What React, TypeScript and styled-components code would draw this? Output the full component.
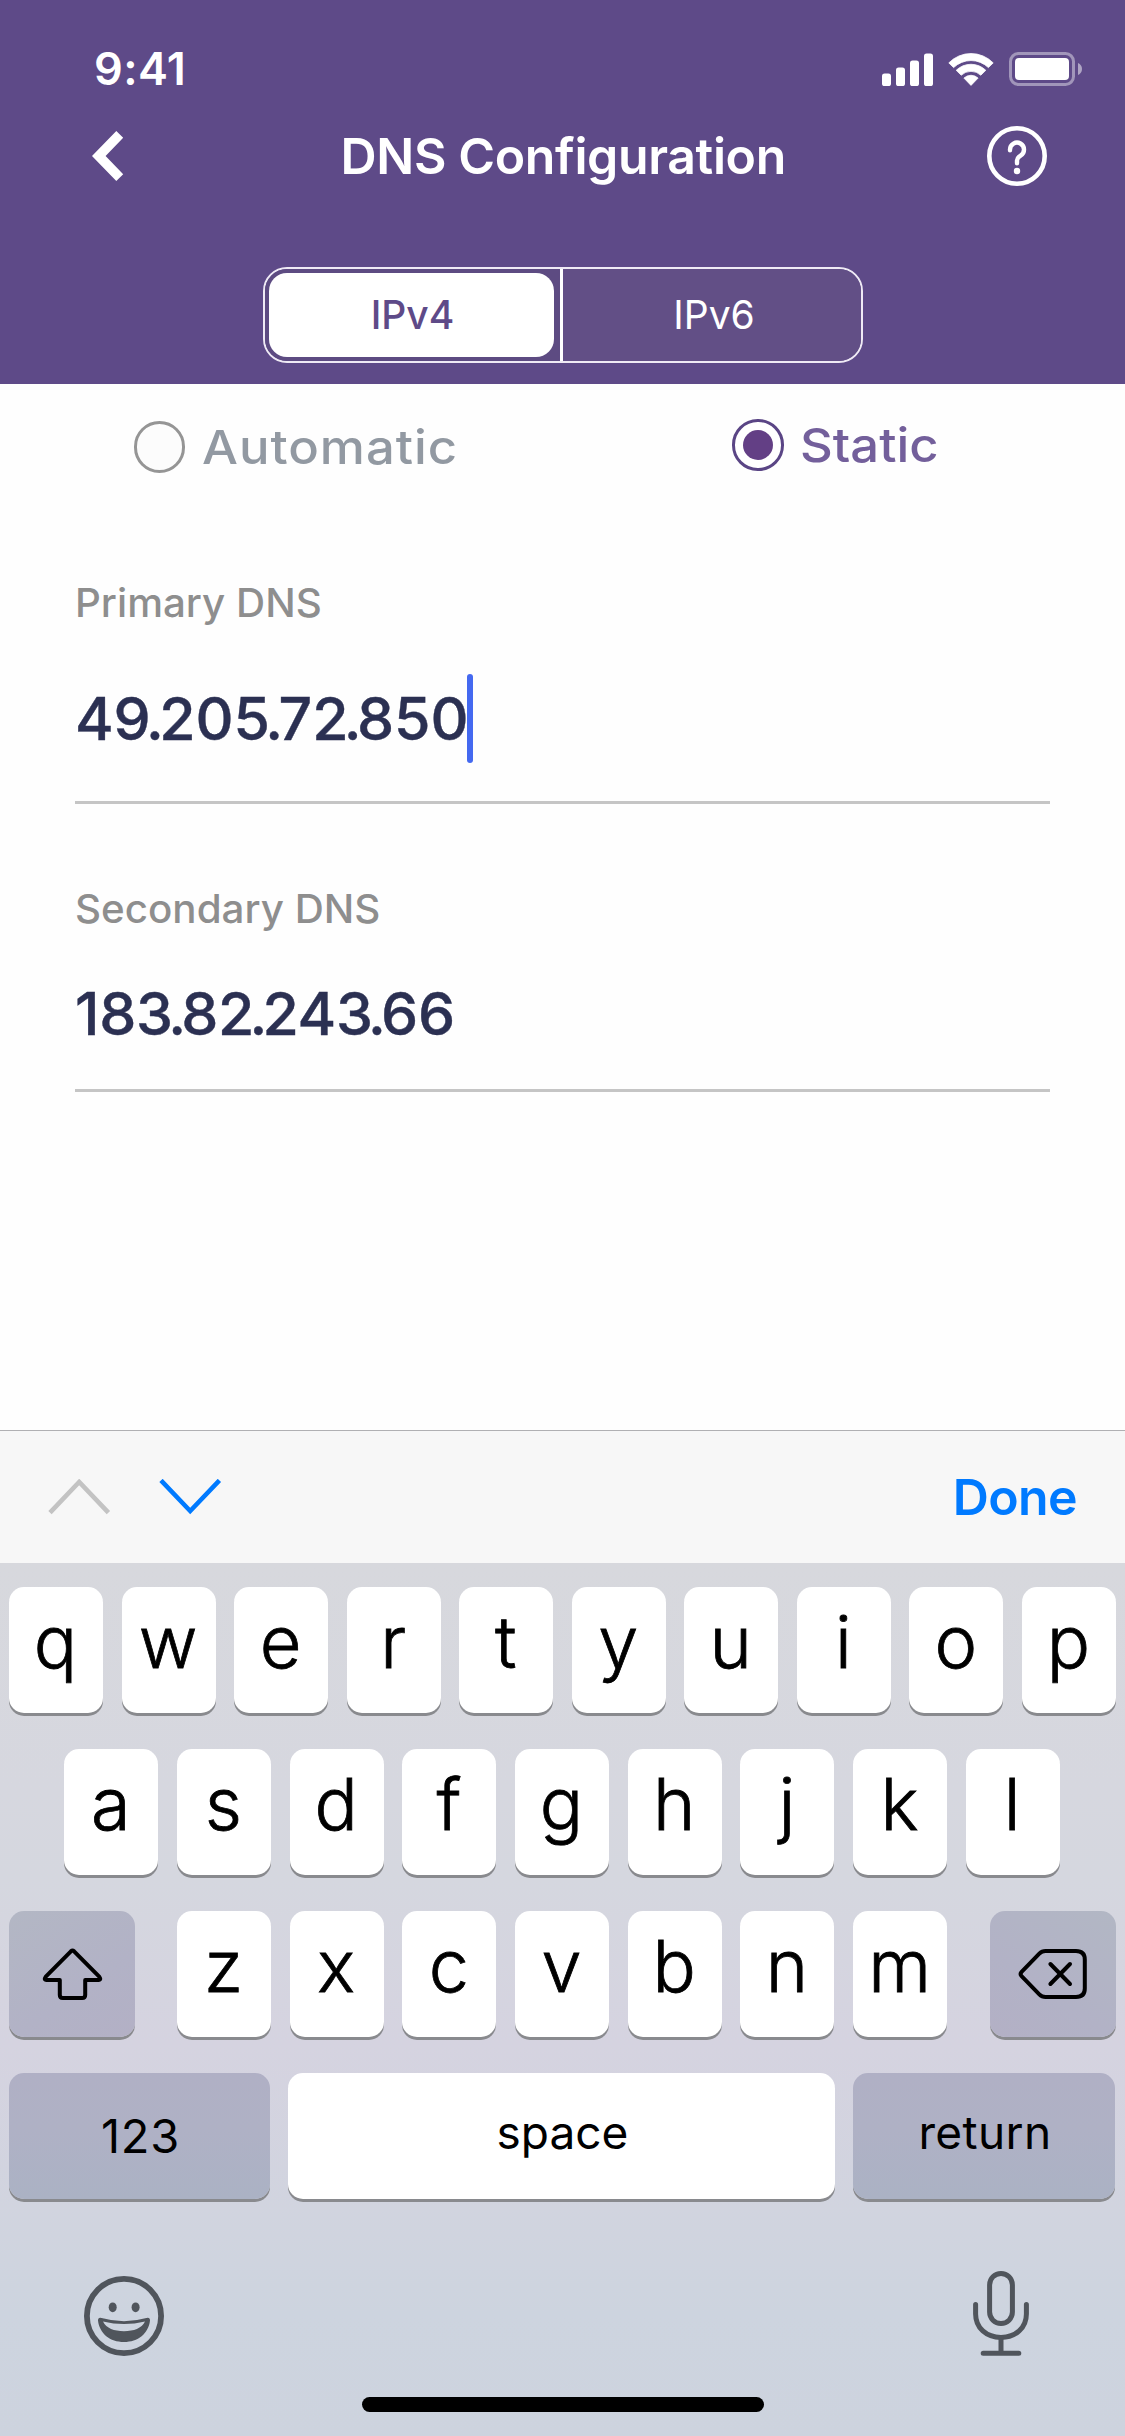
import React, { useState } from "react";
import styled, { createGlobalStyle, css } from "styled-components";

const GlobalStyle = createGlobalStyle`
  *, *::before, *::after { box-sizing: border-box; }
  html, body { margin: 0; padding: 0; background: #fefefe; }
  button { margin: 0; padding: 0; border: 0; background: none; color: inherit; font: inherit; }
  svg { display: block; flex: none; }
`;

const Screen = styled.div`
  display: flex;
  flex-direction: column;
  width: 1125px;
  height: 2436px;
  overflow: hidden;
  background: #fefefe;
  font-family: Inter, "Liberation Sans", sans-serif;
  white-space: nowrap;
`;

/* ---------- header ---------- */

const Header = styled.header`
  flex: none;
  display: flex;
  flex-direction: column;
  align-items: center;
  height: 384px;
  background: #5e4a88;
  color: #fff;
`;

const StatusBar = styled.div`
  display: flex;
  align-items: center;
  justify-content: space-between;
  width: 100%;
  height: 112px;
  padding: 26px 43px 0 94px;
`;

const Clock = styled.span`
  font-size: 45px;
  font-weight: 600;
  line-height: 60px;
  letter-spacing: 0.4px;
`;

const StatusIcons = styled.div`
  display: flex;
  align-items: center;
  gap: 15px;
`;

const NavBar = styled.nav`
  display: flex;
  align-items: center;
  justify-content: space-between;
  width: 100%;
  height: 88px;
  padding: 0 78px 0 92px;
`;

const NavButton = styled.button`
  display: flex;
  width: 60px;
`;

const Title = styled.h1`
  margin: 0 12.5px 0 0;
  font-size: 50px;
  font-weight: 600;
  line-height: 64px;
  letter-spacing: -0.37px;
`;

const Segments = styled.div`
  display: flex;
  width: 600px;
  height: 96px;
  margin-top: 67px;
  border: 2px solid #efeaf5;
  border-radius: 24px;
  overflow: hidden;
`;

const Segment = styled.button<{ $active: boolean }>`
  flex: 1;
  padding: 4px;
  background: ${(p) => (p.$active ? "#5d4b82" : "#624f86")};
  color: ${(p) => (p.$active ? "#5e4a88" : "#fff")};
  font-size: 39px;
  font-weight: ${(p) => (p.$active ? 500 : 400)};

  &:first-child {
    flex: none;
    width: 295px;
  }

  & + & {
    border-left: 3px solid #fff;
  }
`;

const SegmentLabel = styled.span<{ $active: boolean }>`
  display: flex;
  align-items: center;
  justify-content: center;
  height: 84px;
  margin-right: ${(p) => (p.$active ? "2px" : "0")};
  padding: 0 0 1px ${(p) => (p.$active ? "3px" : "5px")};
  border-radius: 18px;
  background: ${(p) => (p.$active ? "#fff" : "transparent")};
`;

/* ---------- form ---------- */

const Form = styled.main`
  flex: none;
  height: 1046px;
  padding: 0 75px;
`;

const RadioRow = styled.div`
  display: grid;
  grid-template-columns: 598.5px 1fr;
  height: 195px;
  padding: 34px 0 0 58.5px;
`;

const RadioOption = styled.label<{ $checked: boolean }>`
  display: flex;
  align-items: center;
  gap: 16.5px;
  height: 54px;
  margin-top: ${(p) => (p.$checked ? "0" : "2px")};
  color: ${(p) => (p.$checked ? "#735f9b" : "#9299a2")};
`;

const RadioText = styled.span<{ $tracking: number }>`
  padding-bottom: 2px;
  font-size: 47px;
  font-weight: 500;
  letter-spacing: ${(p) => p.$tracking}px;
  transform: scaleX(1.08);
  transform-origin: left;
`;

const RadioMark = styled.span<{ $checked: boolean }>`
  display: flex;
  align-items: center;
  justify-content: center;
  width: 51.5px;
  height: 51.5px;
  border: 3px solid ${(p) => (p.$checked ? "#5a4585" : "#959595")};
  border-radius: 50%;
  background: ${(p) => (p.$checked ? "#fff" : "#fcfcfc")};

  &::after {
    content: "";
    width: 30px;
    height: 30px;
    border-radius: 50%;
    background: ${(p) => (p.$checked ? "#633f85" : "transparent")};
  }
`;

const Field = styled.div<{ $focused: boolean }>`
  display: flex;
  flex-direction: column;
  gap: ${(p) => (p.$focused ? "47px" : "36px")};
  padding-bottom: ${(p) => (p.$focused ? "38px" : "31px")};
  border-bottom: 3px solid #c5c5c5;

  & + & {
    margin-top: 81px;
  }
`;

const FieldLabel = styled.span`
  height: 48px;
  color: #8e8e8e;
  font-size: 39px;
  font-weight: 500;
  line-height: 48px;
  transform: scaleX(1.034);
  transform-origin: left;
`;

const FieldValue = styled.div<{ $tracking: number }>`
  display: flex;
  align-items: center;
  height: 89px;
  color: #2b3052;
  font-size: 59px;
  font-weight: 500;
  letter-spacing: ${(p) => p.$tracking}px;
  -webkit-text-stroke: 0.4px #2b3052;
`;

const Dot = styled.span`
  margin: 0 -4.6px;
`;

const Caret = styled.span`
  width: 6px;
  height: 89px;
  margin-left: -1.5px;
  border-radius: 3px;
  background: #4469f0;
`;

/* ---------- keyboard ---------- */

const AccessoryBar = styled.div`
  flex: none;
  display: flex;
  align-items: center;
  height: 133px;
  padding: 0 48px;
  border-top: 1px solid #b0b0b3;
  background: #f7f7f7;
`;

const StepButton = styled.button<{ $disabled?: boolean }>`
  display: flex;
  margin-right: 48px;
  color: ${(p) => (p.$disabled ? "#c3c3c3" : "#007aff")};
`;

const DoneButton = styled.button`
  margin-left: auto;
  color: #007aff;
  font-size: 50px;
  font-weight: 600;
  letter-spacing: -0.6px;
`;

const Keyboard = styled.section`
  flex: 1;
  display: flex;
  flex-direction: column;
  gap: 36px;
  padding: 24px 9px 0;
  background: linear-gradient(180deg, #d7d8dd 0%, #d6d7df 26%, #d5d7df 36%, #d5d3e0 55%, #d1d4df 74%, #cdd4df 86%, #cdd3de 100%);
`;

const KeyRow = styled.div`
  display: flex;
  justify-content: space-between;
  height: 126px;
`;

const WordRow = styled.div`
  display: flex;
  gap: 18px;
  height: 126px;
`;

const LetterKeys = styled.div`
  display: flex;
  gap: 18.7px;
  margin: 0 auto;
  padding-right: 1px;
`;

const keyCap = css`
  display: flex;
  align-items: center;
  justify-content: center;
  height: 126px;
  border-radius: 15px;
  box-shadow: 0 3px 0 #898a8e;
  color: #000;
`;

const LetterKey = styled.button`
  ${keyCap}
  width: 94px;
  padding: 0 1px 17.5px 0;
  background: #fff;
  font-size: 72px;
  font-weight: 300;
  -webkit-text-stroke: 0.8px #000;
`;

const ActionKey = styled.button<{ $width: number; $tone: "left" | "right" | "light"; $lift?: number }>`
  ${keyCap}
  width: ${(p) => p.$width}px;
  padding-bottom: ${(p) => p.$lift ?? 0}px;
  background: ${(p) =>
    p.$tone === "light"
      ? "#fff"
      : p.$tone === "left"
        ? "linear-gradient(145deg, #b3b7c4, #b2b2c6 60%, #b3b0c5)"
        : "linear-gradient(215deg, #b2b7c4, #b2b2c6 60%, #b3b0c5)"};
`;

const WordKey = styled(ActionKey)<{ $size?: number; $spacing?: number }>`
  padding-left: 2px;
  background: ${(p) => (p.$tone === "light" ? "#fff" : "linear-gradient(180deg, #b0b0c5, #afb1c5 45%, #abb2c4)")};
  font-size: ${(p) => p.$size ?? 46}px;
  font-weight: 400;
  letter-spacing: ${(p) => p.$spacing ?? 0}px;
`;

const KeyboardFooter = styled.div`
  display: flex;
  align-items: flex-start;
  justify-content: space-between;
  height: 126px;
  padding: 36px 87px 0 75px;
  color: #50555c;
`;

const EmojiButton = styled.button`
  display: flex;
  padding-top: 5px;
`;

const HomeIndicator = styled.div`
  width: 402px;
  height: 15px;
  margin: 0 auto;
  border-radius: 8px;
  background: #000;
`;

/* ---------- icons ---------- */

const SignalIcon = () => (
  <svg width="51" height="33" viewBox="0 0 51 33" fill="#fff">
    <rect x="0" y="20.5" width="9" height="12.5" rx="2.6" />
    <rect x="14" y="14.5" width="9" height="18.5" rx="2.6" />
    <rect x="28" y="7.5" width="9" height="25.5" rx="2.6" />
    <rect x="42" y="0.5" width="9" height="32.5" rx="2.6" />
  </svg>
);

const WifiIcon = () => (
  <svg width="46" height="33" viewBox="0 0 46 33" fill="#fff" stroke="#fff" strokeWidth="0.8" strokeLinejoin="round">
    <path d="M.8 9.9A31 31 0 0 1 45.2 9.9L40.4 14.6A25 25 0 0 0 5.6 14.6Z" />
    <path d="M8.2 17.3A21.2 21.2 0 0 1 37.8 17.3L32.8 22.2A14.3 14.3 0 0 0 13.2 22.2Z" />
    <path d="M15.9 25.1A10.3 10.3 0 0 1 30.1 25.1L23 32.4Z" />
  </svg>
);

const BatteryIcon = () => (
  <svg width="73" height="34" viewBox="0 0 73 34" fill="none">
    <rect x="1.5" y="1.5" width="63" height="31" rx="8" stroke="#fff" strokeOpacity="0.42" strokeWidth="3" />
    <rect x="6" y="6" width="54" height="22" rx="4" fill="#fff" />
    <path d="M69 11C71.6 12 73 14.4 73 17S71.6 22 69 23Z" fill="#fff" fillOpacity="0.5" />
  </svg>
);

const BackIcon = () => (
  <svg width="32" height="50" viewBox="0 0 32 50" fill="#fff">
    <path d="M0 25L24.3 0L31.2 6.8L13.6 25L31.2 43.2L24.3 50Z" />
  </svg>
);

const HelpIcon = () => (
  <svg width="60" height="60" viewBox="0 0 60 60" fill="none" stroke="#fff">
    <circle cx="30" cy="30" r="27.7" strokeWidth="4.6" />
    <path d="M23 24.2V23.6A7 7 0 1 1 33.6 29.6C31 31.2 30 32 30 34.4V37.2" strokeWidth="4.4" strokeLinecap="round" strokeLinejoin="round" />
    <circle cx="30" cy="45" r="3.2" fill="#fff" stroke="none" />
  </svg>
);

const StepIcon = ({ down }: { down?: boolean }) => (
  <svg width="63" height="36" viewBox="0 0 63 36" fill="none" stroke="currentColor" strokeWidth="4.6">
    <path d={down ? "M2 1.4L31.2 32L60.4 1.4" : "M2 33.6L31.2 3L60.4 33.6"} />
  </svg>
);

const ShiftIcon = () => (
  <svg width="61" height="54" viewBox="0 0 61 54" fill="none" stroke="#000" strokeWidth="4" strokeLinejoin="round">
    <path d="M28.9 4.3Q30.5 2.8 32.1 4.3L57.2 29.6Q59.6 33 56.4 33H43.2V48Q43.2 51 40.2 51H20.8Q17.8 51 17.8 48V33H4.6Q1.4 33 3.8 29.6Z" />
  </svg>
);

const DeleteIcon = () => (
  <svg width="71" height="52" viewBox="0 0 71 52" fill="none" stroke="#000" strokeWidth="4" strokeLinecap="round" strokeLinejoin="round">
    <path d="M27.5 3H58Q66.8 3 66.8 11.5V40.5Q66.8 49 58 49H27.5Q24 49 21.3 46.3L3.6 28.2Q1.6 26 3.6 23.8L21.3 5.7Q24 3 27.5 3Z" />
    <path d="M32.4 16L52 36M52 16L32.4 36" />
  </svg>
);

const EmojiIcon = () => (
  <svg width="80" height="80" viewBox="0 0 80 80" fill="currentColor">
    <circle cx="40" cy="40" r="37.1" fill="none" stroke="currentColor" strokeWidth="5.8" />
    <ellipse cx="28.7" cy="31.3" rx="4" ry="4.9" />
    <ellipse cx="51.6" cy="31.3" rx="4" ry="4.9" />
    <path
      fillRule="evenodd"
      d="M14 44.5Q14 41 17.6 42Q40 48.4 62.4 42Q66 41 66 44.5C64.5 57.5 54 66 40 66S15.5 57.5 14 44.5ZM19 45.6C22.5 52.5 30 55.2 40 55.2S57.5 52.5 61 45.6Q40 50.6 19 45.6Z"
    />
  </svg>
);

const MicIcon = () => (
  <svg width="56" height="85" viewBox="0 0 56 85" fill="none" stroke="currentColor" strokeWidth="5" strokeLinecap="round">
    <rect x="16.6" y="2.5" width="22.8" height="50" rx="11.4" />
    <path d="M2.6 33.5V43C2.6 57 13.4 66.4 28 66.4S53.4 57 53.4 43V33.5" />
    <path d="M28 66.4V82M10.2 82.2H45.8" />
  </svg>
);

/* ---------- screen ---------- */

const protocols = ["IPv4", "IPv6"];
const modes = [
  { name: "Automatic", tracking: 0.9 },
  { name: "Static", tracking: 0 },
];
const fields = [
  { label: "Primary DNS", value: "49.205.72.850", tracking: -0.1 },
  { label: "Secondary DNS", value: "183.82.243.66", tracking: -0.3 },
];

const Address = ({ value }: { value: string }) => (
  <span>
    {value.split(".").map((part, i) => (
      <React.Fragment key={i}>
        {i > 0 && <Dot>.</Dot>}
        {part}
      </React.Fragment>
    ))}
  </span>
);

const Letters = ({ keys }: { keys: string }) => (
  <>
    {keys.split("").map((k) => (
      <LetterKey key={k}>{k}</LetterKey>
    ))}
  </>
);

export default function App() {
  const [protocol, setProtocol] = useState("IPv4");
  const [mode, setMode] = useState("Static");
  const [focus, setFocus] = useState(0);

  return (
    <>
      <GlobalStyle />
      <Screen>
        <Header>
          <StatusBar>
            <Clock>9:41</Clock>
            <StatusIcons>
              <SignalIcon />
              <WifiIcon />
              <BatteryIcon />
            </StatusIcons>
          </StatusBar>
          <NavBar>
            <NavButton aria-label="Back">
              <BackIcon />
            </NavButton>
            <Title>DNS Configuration</Title>
            <NavButton aria-label="Help">
              <HelpIcon />
            </NavButton>
          </NavBar>
          <Segments>
            {protocols.map((name) => (
              <Segment key={name} $active={name === protocol} onClick={() => setProtocol(name)}>
                <SegmentLabel $active={name === protocol}>{name}</SegmentLabel>
              </Segment>
            ))}
          </Segments>
        </Header>

        <Form>
          <RadioRow>
            {modes.map(({ name, tracking }) => (
              <RadioOption key={name} $checked={name === mode} onClick={() => setMode(name)}>
                <RadioMark $checked={name === mode} />
                <RadioText $tracking={tracking}>{name}</RadioText>
              </RadioOption>
            ))}
          </RadioRow>
          {fields.map((field, i) => (
            <Field key={field.label} $focused={i === focus} onClick={() => setFocus(i)}>
              <FieldLabel>{field.label}</FieldLabel>
              <FieldValue $tracking={field.tracking}>
                <Address value={field.value} />
                {i === focus && <Caret />}
              </FieldValue>
            </Field>
          ))}
        </Form>

        <AccessoryBar>
          <StepButton $disabled aria-label="Previous field">
            <StepIcon />
          </StepButton>
          <StepButton aria-label="Next field">
            <StepIcon down />
          </StepButton>
          <DoneButton>Done</DoneButton>
        </AccessoryBar>

        <Keyboard>
          <KeyRow>
            <Letters keys="qwertyuiop" />
          </KeyRow>
          <KeyRow>
            <LetterKeys>
              <Letters keys="asdfghjkl" />
            </LetterKeys>
          </KeyRow>
          <KeyRow>
            <ActionKey $width={126} $tone="left" aria-label="Shift">
              <ShiftIcon />
            </ActionKey>
            <LetterKeys>
              <Letters keys="zxcvbnm" />
            </LetterKeys>
            <ActionKey $width={126} $tone="right" aria-label="Delete">
              <DeleteIcon />
            </ActionKey>
          </KeyRow>
          <WordRow>
            <WordKey $width={261} $tone="left" $size={47} $spacing={0.7} $lift={2}>
              123
            </WordKey>
            <WordKey $width={547} $tone="light" $lift={8}>
              space
            </WordKey>
            <WordKey $width={262} $tone="right" $lift={8} $spacing={0.4}>
              return
            </WordKey>
          </WordRow>
          <KeyboardFooter>
            <EmojiButton aria-label="Emoji">
              <EmojiIcon />
            </EmojiButton>
            <MicIcon />
          </KeyboardFooter>
          <HomeIndicator />
        </Keyboard>
      </Screen>
    </>
  );
}
